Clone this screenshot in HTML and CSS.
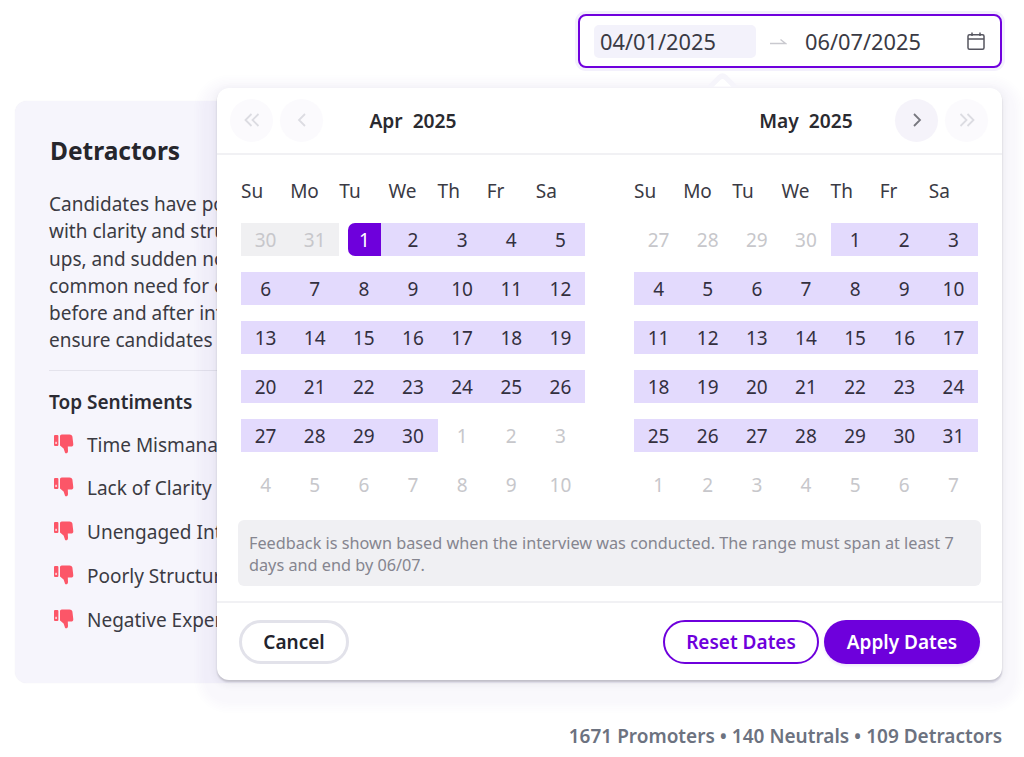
FILE: index.html
```html
<!DOCTYPE html>
<html lang="en">
<head>
<meta charset="utf-8">
<title>Detractors</title>
<link rel="stylesheet" href="styles.css">
</head>
<body>
<div class="page">
  <div class="topbar">
    <div class="range-input">
      <span class="date-field active">04/01/2025</span>
      <svg class="sep" width="18" height="10" viewBox="0 0 18 10"><path d="M1 7.5H16.5L11.5 3.5" fill="none" stroke="#c9c9cf" stroke-width="1.4"/></svg>
      <span class="date-field">06/07/2025</span>
      <svg class="cal" width="20" height="20" viewBox="0 0 20 20" fill="none" stroke="#55555f" stroke-width="1.5"><rect x="2" y="3.7" width="16" height="14.6" rx="1.5"/><path d="M2 8H18M6 1.5V5M14 1.5V5"/></svg>
    </div>
  </div>

  <section class="card">
    <h2 class="card-title">Detractors</h2>
    <p class="card-text">Candidates have pointed<br>with clarity and structure<br>ups, and sudden no-shows<br>common need for clear<br>before and after interviews<br>ensure candidates feel</p>
    <hr class="card-rule">
    <h3 class="card-sub">Top Sentiments</h3>
    <ul class="sentiments">
      <li><svg class="thumb" width="21" height="21" viewBox="0 0 21 21"><rect x="1" y="2" width="4.4" height="11" rx="1" fill="#fc5668"/><rect x="2.3" y="8.8" width="1.6" height="2.2" fill="#fff" opacity=".75"/><path d="M7 3.2C7 2.3 7.8 1.5 8.7 1.5H16.5C18 1.5 19 2.4 19.4 3.6L20.3 11.2C20.4 12.6 19.4 13.5 18 13.5H14.8L15 18C15 19.5 14 20.5 12.9 20.3C12.2 20.2 11.9 19.6 11.8 19L10.6 15.4L7 12.4Z" fill="#fc5668"/></svg>Time Mismanagement</li>
      <li><svg class="thumb" width="21" height="21" viewBox="0 0 21 21"><rect x="1" y="2" width="4.4" height="11" rx="1" fill="#fc5668"/><rect x="2.3" y="8.8" width="1.6" height="2.2" fill="#fff" opacity=".75"/><path d="M7 3.2C7 2.3 7.8 1.5 8.7 1.5H16.5C18 1.5 19 2.4 19.4 3.6L20.3 11.2C20.4 12.6 19.4 13.5 18 13.5H14.8L15 18C15 19.5 14 20.5 12.9 20.3C12.2 20.2 11.9 19.6 11.8 19L10.6 15.4L7 12.4Z" fill="#fc5668"/></svg>Lack of Clarity</li>
      <li><svg class="thumb" width="21" height="21" viewBox="0 0 21 21"><rect x="1" y="2" width="4.4" height="11" rx="1" fill="#fc5668"/><rect x="2.3" y="8.8" width="1.6" height="2.2" fill="#fff" opacity=".75"/><path d="M7 3.2C7 2.3 7.8 1.5 8.7 1.5H16.5C18 1.5 19 2.4 19.4 3.6L20.3 11.2C20.4 12.6 19.4 13.5 18 13.5H14.8L15 18C15 19.5 14 20.5 12.9 20.3C12.2 20.2 11.9 19.6 11.8 19L10.6 15.4L7 12.4Z" fill="#fc5668"/></svg>Unengaged Interviewers</li>
      <li><svg class="thumb" width="21" height="21" viewBox="0 0 21 21"><rect x="1" y="2" width="4.4" height="11" rx="1" fill="#fc5668"/><rect x="2.3" y="8.8" width="1.6" height="2.2" fill="#fff" opacity=".75"/><path d="M7 3.2C7 2.3 7.8 1.5 8.7 1.5H16.5C18 1.5 19 2.4 19.4 3.6L20.3 11.2C20.4 12.6 19.4 13.5 18 13.5H14.8L15 18C15 19.5 14 20.5 12.9 20.3C12.2 20.2 11.9 19.6 11.8 19L10.6 15.4L7 12.4Z" fill="#fc5668"/></svg>Poorly Structured</li>
      <li><svg class="thumb" width="21" height="21" viewBox="0 0 21 21"><rect x="1" y="2" width="4.4" height="11" rx="1" fill="#fc5668"/><rect x="2.3" y="8.8" width="1.6" height="2.2" fill="#fff" opacity=".75"/><path d="M7 3.2C7 2.3 7.8 1.5 8.7 1.5H16.5C18 1.5 19 2.4 19.4 3.6L20.3 11.2C20.4 12.6 19.4 13.5 18 13.5H14.8L15 18C15 19.5 14 20.5 12.9 20.3C12.2 20.2 11.9 19.6 11.8 19L10.6 15.4L7 12.4Z" fill="#fc5668"/></svg>Negative Experience</li>
    </ul>
  </section>

  <div class="stats">1671 Promoters • 140 Neutrals • 109 Detractors</div>

  <div class="popover">
    <div class="pop-arrow"></div>
    <header class="pop-head">
      <div class="head-half left">
        <div class="navs">
          <button class="nav off"><svg width="18" height="16" viewBox="0 0 18 16" fill="none" stroke="currentColor" stroke-width="1.8"><path d="M8.5 2L2.5 8L8.5 14M15.5 2L9.5 8L15.5 14"/></svg></button>
          <button class="nav off"><svg width="10" height="16" viewBox="0 0 10 16" fill="none" stroke="currentColor" stroke-width="1.8"><path d="M8 2L2 8L8 14"/></svg></button>
        </div>
        <div class="month-title">Apr&nbsp; 2025</div>
        <div class="navs"></div>
      </div>
      <div class="head-half right">
        <div class="navs"></div>
        <div class="month-title">May&nbsp; 2025</div>
        <div class="navs">
          <button class="nav on"><svg width="10" height="16" viewBox="0 0 10 16" fill="none" stroke="currentColor" stroke-width="1.8"><path d="M2 2L8 8L2 14"/></svg></button>
          <button class="nav off"><svg width="18" height="16" viewBox="0 0 18 16" fill="none" stroke="currentColor" stroke-width="1.8"><path d="M2.5 2L8.5 8L2.5 14M9.5 2L15.5 8L9.5 14"/></svg></button>
        </div>
      </div>
    </header>

    <div class="months">
      <div class="month">
        <div class="weekdays"><span>Su</span><span>Mo</span><span>Tu</span><span>We</span><span>Th</span><span>Fr</span><span>Sa</span></div>
        <div class="days">
          <span class="d prev">30</span><span class="d prev">31</span><span class="d start"><b>1</b></span><span class="d in">2</span><span class="d in">3</span><span class="d in">4</span><span class="d in">5</span>
          <span class="d in">6</span><span class="d in">7</span><span class="d in">8</span><span class="d in">9</span><span class="d in">10</span><span class="d in">11</span><span class="d in">12</span>
          <span class="d in">13</span><span class="d in">14</span><span class="d in">15</span><span class="d in">16</span><span class="d in">17</span><span class="d in">18</span><span class="d in">19</span>
          <span class="d in">20</span><span class="d in">21</span><span class="d in">22</span><span class="d in">23</span><span class="d in">24</span><span class="d in">25</span><span class="d in">26</span>
          <span class="d in">27</span><span class="d in">28</span><span class="d in">29</span><span class="d in">30</span><span class="d out">1</span><span class="d out">2</span><span class="d out">3</span>
          <span class="d out">4</span><span class="d out">5</span><span class="d out">6</span><span class="d out">7</span><span class="d out">8</span><span class="d out">9</span><span class="d out">10</span>
        </div>
      </div>
      <div class="month">
        <div class="weekdays"><span>Su</span><span>Mo</span><span>Tu</span><span>We</span><span>Th</span><span>Fr</span><span>Sa</span></div>
        <div class="days">
          <span class="d out">27</span><span class="d out">28</span><span class="d out">29</span><span class="d out">30</span><span class="d in">1</span><span class="d in">2</span><span class="d in">3</span>
          <span class="d in">4</span><span class="d in">5</span><span class="d in">6</span><span class="d in">7</span><span class="d in">8</span><span class="d in">9</span><span class="d in">10</span>
          <span class="d in">11</span><span class="d in">12</span><span class="d in">13</span><span class="d in">14</span><span class="d in">15</span><span class="d in">16</span><span class="d in">17</span>
          <span class="d in">18</span><span class="d in">19</span><span class="d in">20</span><span class="d in">21</span><span class="d in">22</span><span class="d in">23</span><span class="d in">24</span>
          <span class="d in">25</span><span class="d in">26</span><span class="d in">27</span><span class="d in">28</span><span class="d in">29</span><span class="d in">30</span><span class="d in">31</span>
          <span class="d out">1</span><span class="d out">2</span><span class="d out">3</span><span class="d out">4</span><span class="d out">5</span><span class="d out">6</span><span class="d out">7</span>
        </div>
      </div>
    </div>

    <p class="note">Feedback is shown based when the interview was conducted. The range must span at least 7 days and end by 06/07.</p>

    <footer class="pop-foot">
      <button class="btn cancel">Cancel</button>
      <div class="foot-right">
        <button class="btn reset">Reset Dates</button>
        <button class="btn apply">Apply Dates</button>
      </div>
    </footer>
  </div>
</div>
</body>
</html>
```
FILE: styles.css
```css
* { box-sizing: border-box; }
html, body { margin: 0; padding: 0; background: #fff; }
body { font-family: "Noto Sans", "Open Sans", sans-serif; color: #33343c; }
button { font-family: inherit; cursor: pointer; }

.page { position: relative; width: 1024px; height: 757px; overflow: hidden; display: flex; flex-direction: column; }

.topbar { display: flex; justify-content: flex-end; padding: 14px 22px 0 0; }
.range-input {
  width: 424px; height: 54px; display: flex; align-items: center; padding: 0 14px;
  border: 2px solid #6f00dd; border-radius: 8px; background: #fff;
  box-shadow: 0 0 0 3px #f3f0fc;
}
.date-field { width: 162px; height: 33px; line-height: 33px; padding-left: 6px; border-radius: 5px; font-size: 21.8px; color: #3a3a44; }
.date-field.active { background: #f3f2fb; }
.sep { margin: 0 12px 0 13px; flex: none; }
.cal { margin-left: auto; flex: none; }

.card {
  margin: 33px 22px 0 15px; height: 582px; padding: 33px 0 0 34px;
  background: #f6f5fc; border-radius: 12px; box-shadow: 0 0 1px rgba(90,80,140,.12);
}
.card-title { margin: 0 0 0 1px; font-size: 24.5px; line-height: 34px; font-weight: 700; color: #26262c; }
.card-text { margin: 23px 0 0; font-size: 19px; line-height: 27.3px; white-space: nowrap; color: #3b3b43; }
.card-rule { margin: 15px 0 0; border: 0; border-top: 1px solid #e4e3ec; }
.card-sub { margin: 17px 0 0; font-size: 19px; line-height: 28px; font-weight: 600; color: #2b2b33; }
.sentiments { list-style: none; margin: 7px 0 0; padding: 0 0 0 4px; }
.sentiments li { display: flex; align-items: center; height: 43.8px; font-size: 19px; color: #3b3b43; }
.thumb { flex: none; margin-right: 13px; margin-top: -3px; }

.stats { margin: 39px 22px 0 0; text-align: right; font-size: 19px; line-height: 28px; font-weight: 600; color: #6c7280; }

.popover {
  position: absolute; left: 217px; top: 88px; width: 785px; height: 592px;
  background: #fff; border-radius: 12px;
  box-shadow: 0 2px 2px rgba(0,0,0,.16), 0 3px 8px 1px rgba(40,40,70,.07), 0 10px 8px 18px rgba(90,70,170,.035);
  display: flex; flex-direction: column;
}
.pop-arrow {
  position: absolute; left: 498px; top: -7px; width: 15px; height: 15px; background: #fff;
  transform: rotate(45deg); border-radius: 3px 0 0 0;
  box-shadow: -2px -2px 0 3px #f6f5fb;
  clip-path: polygon(-40% -40%, 120% -40%, -40% 120%);
}
.pop-head { position: relative; height: 67px; padding: 10px 14px 0 13px; display: flex; justify-content: space-between; border-bottom: 2px solid #f1f1f4; }
.head-half { display: grid; grid-template-columns: 1fr auto 1fr; align-items: center; height: 44px; }
.head-half.left { width: 366px; }
.head-half.right { width: 364px; }
.navs { display: flex; gap: 7px; }
.head-half.right .navs:last-child { justify-content: flex-end; }
.nav { width: 43px; height: 43px; padding: 0; border: 0; border-radius: 50%; display: flex; align-items: center; justify-content: center; }
.nav.off { background: #fbfafd; color: #dcdce2; }
.nav.on { background: #f5f3fa; color: #77777f; }
.month-title { font-size: 19.2px; font-weight: 600; color: #2a2a30; white-space: nowrap; }

.months { display: flex; gap: 49px; padding: 0 24px; }
.month { width: 344px; }
.weekdays { display: grid; grid-template-columns: repeat(7, 1fr); height: 68px; align-items: center; padding-top: 4px; font-size: 19px; color: #3a3a44; }
.days { display: grid; grid-template-columns: repeat(7, 1fr); grid-auto-rows: 33px; row-gap: 16px; }
.d { display: flex; align-items: center; justify-content: center; font-size: 19px; }
.d.in { background: #e3dafd; color: #33303f; }
.d.out { color: #c7c7cb; }
.d.prev { background: #f0f0f2; color: #c7c7cb; }
.d.start { background: linear-gradient(to right, transparent 50%, #e3dafd 50%); }
.d.start b { width: 33px; height: 33px; margin-left: 1px; display: flex; align-items: center; justify-content: center; background: #6e00dc; color: #fff; font-weight: 400; border-radius: 7px 0 0 7px; }

.note { margin: 19px 21px 0; height: 66px; padding: 12px 11px 0; background: #f0f0f3; border-radius: 6px; font-size: 16.25px; line-height: 22px; color: #85858f; }

.pop-foot { margin-top: 15px; border-top: 2px solid #f1f1f4; padding: 17px 22px 0; display: flex; justify-content: space-between; }
.foot-right { display: flex; gap: 5px; }
.btn { height: 44px; border-radius: 22px; font-size: 19px; font-weight: 600; background: #fff; padding: 0; }
.cancel { width: 110px; border: 3px solid #e2e2ea; color: #22232c; }
.reset { width: 156px; border: 2px solid #6e00dc; color: #6e00dc; }
.apply { width: 156px; border: 0; background: #6e00dc; color: #fff; box-shadow: 0 2px 3px rgba(110,0,220,.1); }
```
